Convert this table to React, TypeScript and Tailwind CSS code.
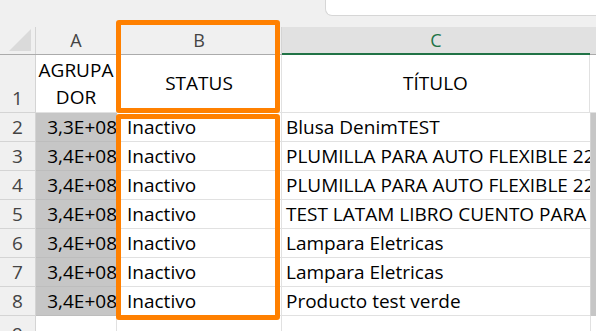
import React from 'react';

type Row = { n: number; code: string; status: string; title: string };

const rows: Row[] = [
  { n: 2, code: '3,3E+08', status: 'Inactivo', title: 'Blusa DenimTEST' },
  { n: 3, code: '3,4E+08', status: 'Inactivo', title: 'PLUMILLA PARA AUTO FLEXIBLE 22"' },
  { n: 4, code: '3,4E+08', status: 'Inactivo', title: 'PLUMILLA PARA AUTO FLEXIBLE 22"' },
  { n: 5, code: '3,4E+08', status: 'Inactivo', title: 'TEST LATAM LIBRO CUENTO PARA NIÑOS' },
  { n: 6, code: '3,4E+08', status: 'Inactivo', title: 'Lampara Eletricas' },
  { n: 7, code: '3,4E+08', status: 'Inactivo', title: 'Lampara Eletricas' },
  { n: 8, code: '3,4E+08', status: 'Inactivo', title: 'Producto test verde' },
];

const SheetGrid: React.FC = () => {
  return (
    <div
      className="relative w-[596px] h-[331px] overflow-hidden bg-[#f0f0f0] text-black"
      style={{ fontFamily: '"Open Sans", "Noto Sans", sans-serif' }}
    >
      {/* formula bar strip */}
      <div className="flex h-[27px]">
        <div className="w-[325px] shrink-0" />
        <div className="flex-1 h-[16px] bg-white border-l border-b border-[#d6d6d6] rounded-bl-[7px]" />
      </div>

      {/* column headers */}
      <div className="flex h-[28px] border-b border-[#ababab] text-[18px] text-[#444]">
        <div className="w-[36px] shrink-0 relative border-r border-[#d4d4d4]">
          <div className="absolute right-[4px] bottom-[3px] w-0 h-0 border-l-[22px] border-l-transparent border-b-[22px] border-b-[#dadada]" />
        </div>
        <div className="w-[81px] shrink-0 flex items-center justify-center border-r border-[#d4d4d4]">A</div>
        <div className="w-[165px] shrink-0 flex items-center justify-center border-r border-[#d4d4d4]">B</div>
        <div className="w-[308px] shrink-0 flex items-center justify-center bg-[#e1e1e1] text-[#217346] border-b-2 border-[#217346] -mb-px">
          C
        </div>
        <div className="flex-1 bg-[#e1e1e1]" />
      </div>

      {/* row 1 */}
      <div className="flex h-[58px] text-[19px]">
        <div className="w-[36px] shrink-0 flex items-end justify-center text-[#444] border-r border-b border-[#d4d4d4]">
          1
        </div>
        <div className="w-[81px] shrink-0 bg-white flex flex-col items-center justify-center leading-[27px] border-r border-b border-[#e1e1e1]">
          <span>AGRUPA</span>
          <span>DOR</span>
        </div>
        <div className="w-[165px] shrink-0 bg-white flex items-center justify-center border-r border-b border-[#e1e1e1]">
          STATUS
        </div>
        <div className="w-[308px] shrink-0 bg-white flex items-center justify-center border-r border-b border-[#e1e1e1]">
          TÍTULO
        </div>
        <div className="flex-1 bg-white border-b border-[#e1e1e1]" />
      </div>

      {/* data rows */}
      {rows.map((r) => (
        <div key={r.n} className="flex h-[29px] text-[19px]">
          <div className="w-[36px] shrink-0 flex items-center justify-center text-[#444] border-r border-b border-[#d4d4d4]">
            {r.n}
          </div>
          <div className="w-[81px] shrink-0 bg-[#c6c6c6] flex items-center justify-end whitespace-nowrap overflow-hidden border-b border-[#bdbdbd]">
            {r.code}
          </div>
          <div className="w-[165px] shrink-0 bg-white flex items-center pl-[10px] border-r border-b border-[#e1e1e1]">
            {r.status}
          </div>
          <div className="w-[308px] shrink-0 bg-white flex items-center pl-[4px] whitespace-nowrap overflow-hidden border-b border-[#e1e1e1]">
            {r.title}
          </div>
          <div className="flex-1 bg-[#c6c6c6] border-l border-[#d4d4d4]" />
        </div>
      ))}

      {/* row 9, cut off at the bottom */}
      <div className="flex h-[30px] text-[19px]">
        <div className="w-[36px] shrink-0 flex items-start justify-center pt-[4px] text-[#444] border-r border-[#d4d4d4]">
          9
        </div>
        <div className="w-[81px] shrink-0 bg-white border-r border-[#e1e1e1]" />
        <div className="w-[165px] shrink-0 bg-white border-r border-[#e1e1e1]" />
        <div className="w-[308px] shrink-0 bg-white" />
        <div className="flex-1 bg-white border-l border-[#e1e1e1]" />
      </div>

      {/* highlight frames around column B */}
      <div className="absolute left-[116px] top-[20px] w-[164px] h-[93px] border-[5px] border-[#ff8000] rounded-[3px]" />
      <div className="absolute left-[116px] top-[114px] w-[164px] h-[206px] border-[5px] border-[#ff8000] rounded-[3px]" />
    </div>
  );
};

export default function App() {
  return <SheetGrid />;
}
